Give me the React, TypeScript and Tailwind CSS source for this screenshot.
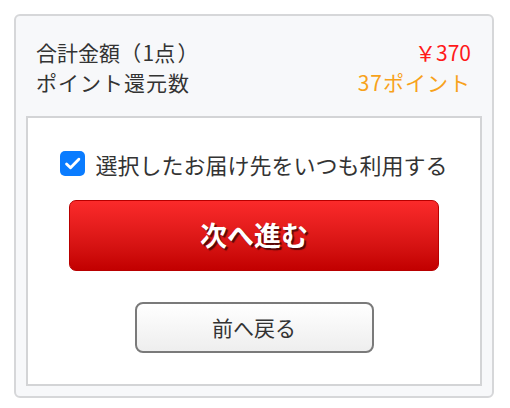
export default function App() {
  return (
    <div
      className="w-[510px] h-[408px] bg-white pt-[14px] pl-[14px]"
      style={{ fontFamily: '"Noto Sans CJK JP", "Noto Sans", sans-serif' }}
    >
      <div className="w-[480px] h-[384px] rounded-[6px] border-2 border-[#d6d7d9] bg-[#f7f8fa] px-[10px] pb-[10px] flex flex-col">
        <div className="pt-[21px] pl-[10px] pr-[11px] h-[100px] text-[21px] leading-[30px]">
          <div className="flex justify-between">
            <span className="text-[#333333]">
              合計金額<span className="ml-[10px] mr-[2px] [font-feature-settings:'palt']">（</span>1点<span className="ml-[3px] [font-feature-settings:'palt']">）</span>
            </span>
            <span className="text-[#ff1a1a]">￥370</span>
          </div>
          <div className="flex justify-between">
            <span className="text-[#333333] tracking-[1px]">ポイント還元数</span>
            <span className="text-[#f7a21b] tracking-[1px]">37ポイント</span>
          </div>
        </div>
        <div className="flex-1 bg-white border-2 border-[#d3d4d6] flex flex-col items-center pt-[33px]">
          <label className="flex items-center gap-[10px] text-[22px] text-[#333333] leading-none">
            <span className="w-[25px] h-[25px] rounded-[5px] bg-[#0a7cff] flex items-center justify-center">
              <svg width="19" height="19" viewBox="0 0 24 24" fill="none">
                <path d="M4.5 12.5l5 5L20 6.5" stroke="white" strokeWidth="3.6" strokeLinecap="round" strokeLinejoin="round" />
              </svg>
            </span>
            選択したお届け先をいつも利用する
          </label>
          <button className="mt-[24px] w-[370px] h-[71px] rounded-[7px] border border-[#b80000] bg-gradient-to-b from-[#fb2a2a] to-[#c20000] text-white text-[27px] font-bold [text-shadow:2px_2px_1px_rgba(0,0,0,0.6)]">
            次へ進む
          </button>
          <button className="mt-[31px] w-[239px] h-[51px] rounded-[8px] border-2 border-[#7a7a7a] bg-gradient-to-b from-white to-[#eeeeee] text-[#333333] text-[21px]">
            前へ戻る
          </button>
        </div>
      </div>
    </div>
  );
}
